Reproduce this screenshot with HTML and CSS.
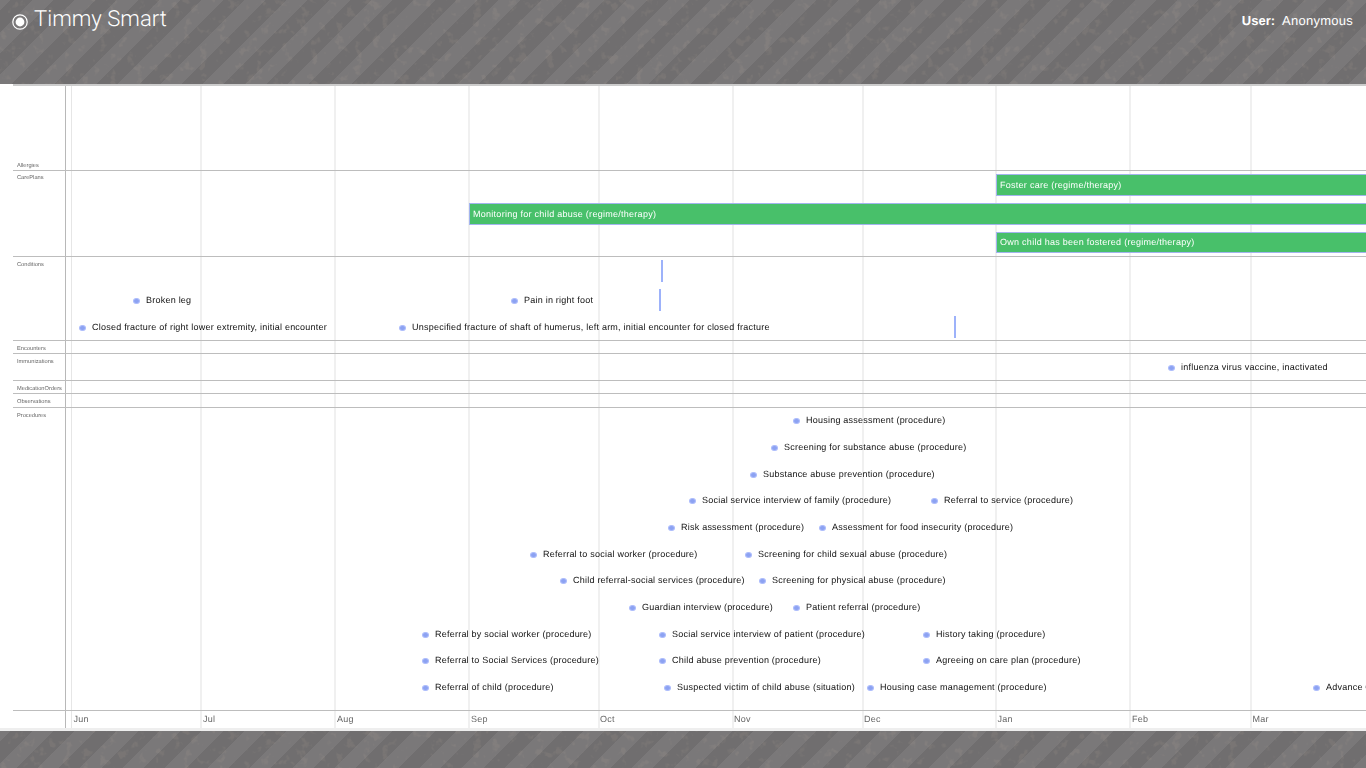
FILE: index.html
```html
<!DOCTYPE html>
<html lang="en">
<head>
<meta charset="utf-8">
<title>Timmy Smart</title>
<link rel="stylesheet" href="styles.css">
</head>
<body>
<header class="banner">
  <svg class="grain" aria-hidden="true"><filter id="speckle" x="0" y="0" width="100%" height="100%"><feTurbulence type="fractalNoise" baseFrequency="0.11" numOctaves="3" seed="4"/><feColorMatrix type="matrix" values="0 0 0 0 0.6  0 0 0 0 0.48  0 0 0 0 0.38  0 0 0 6 -3.5"/></filter><rect width="100%" height="100%" filter="url(#speckle)"/></svg>
  <h1 class="patient"><svg class="patient-icon" viewBox="0 0 16 16" width="16" height="16"><circle cx="8" cy="8" r="7.2" fill="none" stroke="#fff" stroke-width="1.2"/><circle cx="8" cy="8" r="4.4" fill="#fff"/></svg><span>Timmy Smart</span></h1>
  <div class="user"><b>User:</b><span class="user-name">Anonymous</span></div>
</header>
<main class="timeline">
  <div class="grid-line grid-line-thin" style="left:58px"></div>
  <div class="grid-line" style="left:187px"></div>
  <div class="grid-line" style="left:321px"></div>
  <div class="grid-line" style="left:455px"></div>
  <div class="grid-line" style="left:585px"></div>
  <div class="grid-line" style="left:719px"></div>
  <div class="grid-line" style="left:849px"></div>
  <div class="grid-line" style="left:982px"></div>
  <div class="grid-line" style="left:1116px"></div>
  <div class="grid-line" style="left:1237px"></div>
  <div class="axis-line"></div>

  <section class="lane lane-allergies"><h2 class="lane-name lane-name-bottom">Allergies</h2></section>

  <section class="lane lane-careplans"><h2 class="lane-name lane-name-tight">CarePlans</h2>
    <div class="bar bar-tall" style="left:983px;top:3px">Foster care (regime/therapy)</div>
    <div class="bar bar-tall" style="left:456px;top:32px">Monitoring for child abuse (regime/therapy)</div>
    <div class="bar" style="left:983px;top:61px">Own child has been fostered (regime/therapy)</div>
  </section>

  <section class="lane lane-conditions"><h2 class="lane-name">Conditions</h2>
    <div class="tick" style="left:648px;top:3px"></div>
    <div class="tick" style="left:646px;top:32px"></div>
    <div class="tick" style="left:941px;top:59px"></div>
    <div class="event" style="left:121px;top:37px">Broken leg</div>
    <div class="event" style="left:499px;top:37px">Pain in right foot</div>
    <div class="event" style="left:67px;top:64px">Closed fracture of right lower extremity, initial encounter</div>
    <div class="event" style="left:387px;top:64px">Unspecified fracture of shaft of humerus, left arm, initial encounter for closed fracture</div>
  </section>

  <section class="lane lane-encounters"><h2 class="lane-name">Encounters</h2></section>

  <section class="lane lane-immunizations"><h2 class="lane-name">Immunizations</h2>
    <div class="event" style="left:1156px;top:7px">influenza virus vaccine, inactivated</div>
  </section>

  <section class="lane lane-medication"><h2 class="lane-name">MedicationOrders</h2></section>
  <section class="lane lane-observations"><h2 class="lane-name">Observations</h2></section>

  <section class="lane lane-procedures"><h2 class="lane-name">Procedures</h2>
    <div class="event" style="left:781px;top:6px">Housing assessment (procedure)</div>
    <div class="event" style="left:759px;top:33px">Screening for substance abuse (procedure)</div>
    <div class="event" style="left:738px;top:60px">Substance abuse prevention (procedure)</div>
    <div class="event" style="left:677px;top:86px">Social service interview of family (procedure)</div>
    <div class="event" style="left:919px;top:86px">Referral to service (procedure)</div>
    <div class="event" style="left:656px;top:113px">Risk assessment (procedure)</div>
    <div class="event" style="left:807px;top:113px">Assessment for food insecurity (procedure)</div>
    <div class="event" style="left:518px;top:140px">Referral to social worker (procedure)</div>
    <div class="event" style="left:733px;top:140px">Screening for child sexual abuse (procedure)</div>
    <div class="event" style="left:548px;top:166px">Child referral-social services (procedure)</div>
    <div class="event" style="left:747px;top:166px">Screening for physical abuse (procedure)</div>
    <div class="event" style="left:617px;top:193px">Guardian interview (procedure)</div>
    <div class="event" style="left:781px;top:193px">Patient referral (procedure)</div>
    <div class="event" style="left:410px;top:220px">Referral by social worker (procedure)</div>
    <div class="event" style="left:647px;top:220px">Social service interview of patient (procedure)</div>
    <div class="event" style="left:911px;top:220px">History taking (procedure)</div>
    <div class="event" style="left:410px;top:246px">Referral to Social Services (procedure)</div>
    <div class="event" style="left:647px;top:246px">Child abuse prevention (procedure)</div>
    <div class="event" style="left:911px;top:246px">Agreeing on care plan (procedure)</div>
    <div class="event" style="left:410px;top:273px">Referral of child (procedure)</div>
    <div class="event" style="left:652px;top:273px">Suspected victim of child abuse (situation)</div>
    <div class="event" style="left:855px;top:273px">Housing case management (procedure)</div>
    <div class="event" style="left:1301px;top:273px">Advance Care Planning (procedure)</div>
  </section>

  <div class="months">
    <span class="month" style="left:60.5px">Jun</span>
    <span class="month" style="left:190px">Jul</span>
    <span class="month" style="left:324px">Aug</span>
    <span class="month" style="left:458px">Sep</span>
    <span class="month" style="left:587px">Oct</span>
    <span class="month" style="left:721px">Nov</span>
    <span class="month" style="left:851px">Dec</span>
    <span class="month" style="left:984.5px">Jan</span>
    <span class="month" style="left:1119px">Feb</span>
    <span class="month" style="left:1239.5px">Mar</span>
  </div>
</main>
<footer class="footer">
  <svg class="grain" aria-hidden="true"><rect width="100%" height="100%" filter="url(#speckle)"/></svg>
</footer>
</body>
</html>
```
FILE: styles.css
```css
html, body { margin: 0; height: 100%; overflow: hidden; background: #fff; }
body { width: 1366px; height: 768px; display: flex; flex-direction: column; font-family: "Liberation Sans", Arial, sans-serif; color: #222; text-rendering: geometricPrecision; }

.banner, .footer {
  position: relative;
  background: repeating-linear-gradient(135deg, #7a7879 0, #7a7879 7.7px, #706e6f 7.7px, #706e6f 22.7px, #7a7879 22.7px, #7a7879 30px);
}
.grain { position: absolute; left: 0; top: 0; width: 100%; height: 100%; opacity: 0.1; }
.banner { height: 84px; flex: none; display: flex; justify-content: space-between; align-items: flex-start; color: #fff; }
.patient { position: relative; margin: 5px 0 0 12px; display: flex; align-items: center; font: 300 22.1px/28px Roboto, sans-serif; }
.patient-icon { margin: 5px 6px 0 0; }
.user { position: relative; display: flex; gap: 7px; margin: 13px 13px 0 0; font-size: 13px; line-height: 16px; }
.user-name { font-weight: 400; letter-spacing: 0.25px; }

.timeline { position: relative; flex: none; height: 644px; margin-left: 13px; overflow: hidden; will-change: transform; }
.grid-line { position: absolute; top: 0; bottom: 0; width: 2px; background: #f0f0f0; }
.grid-line-thin { width: 1px; background: #e6e6e6; }
.axis-line { position: absolute; left: 52px; top: 0; bottom: 0; width: 1px; background: #b8b8b8; }

.lane { position: relative; box-sizing: border-box; border-top: 1px solid #bdbdbd; }
.lane-allergies { height: 86px; border-top: 2px solid #cccccc; }
.lane-careplans { height: 86px; }
.lane-conditions { height: 84px; }
.lane-encounters { height: 13px; }
.lane-immunizations { height: 27px; }
.lane-medication { height: 13px; }
.lane-observations { height: 14px; }
.lane-procedures { height: 304px; border-bottom: 1px solid #bdbdbd; }

.lane-name { position: absolute; left: 4px; top: 5px; margin: 0; font-size: 5.7px; line-height: 7px; font-weight: 400; color: #666; white-space: nowrap; }
.lane-name-tight { top: 4px; }
.lane-name-bottom { top: auto; bottom: 0; }

.bar { position: absolute; right: -2px; box-sizing: border-box; height: 21px; padding-left: 3px; background: #48c06a; border: 1px solid #a3b4ee; border-right: 0; color: #fff; font-size: 9px; line-height: 19px; letter-spacing: 0.27px; white-space: nowrap; }
.bar-tall { height: 22px; line-height: 20px; }
.tick { position: absolute; width: 2px; height: 22px; background: #9db2fa; }
.event { position: absolute; padding-left: 12px; font-size: 9px; line-height: 12px; letter-spacing: 0.23px; color: #111; white-space: nowrap; }
.event::before { content: ""; position: absolute; left: -1px; top: 4px; box-sizing: border-box; width: 7px; height: 6px; border-radius: 50%; background: #8ca2f2; border: 1px solid #afbefc; }

.months { position: relative; height: 17px; }
.month { position: absolute; top: 2px; font-size: 9px; line-height: 12px; letter-spacing: 0.3px; color: #666; }

.footer { margin-top: 3px; flex: 1; box-shadow: 0 -3px 0 #eee; }
```
